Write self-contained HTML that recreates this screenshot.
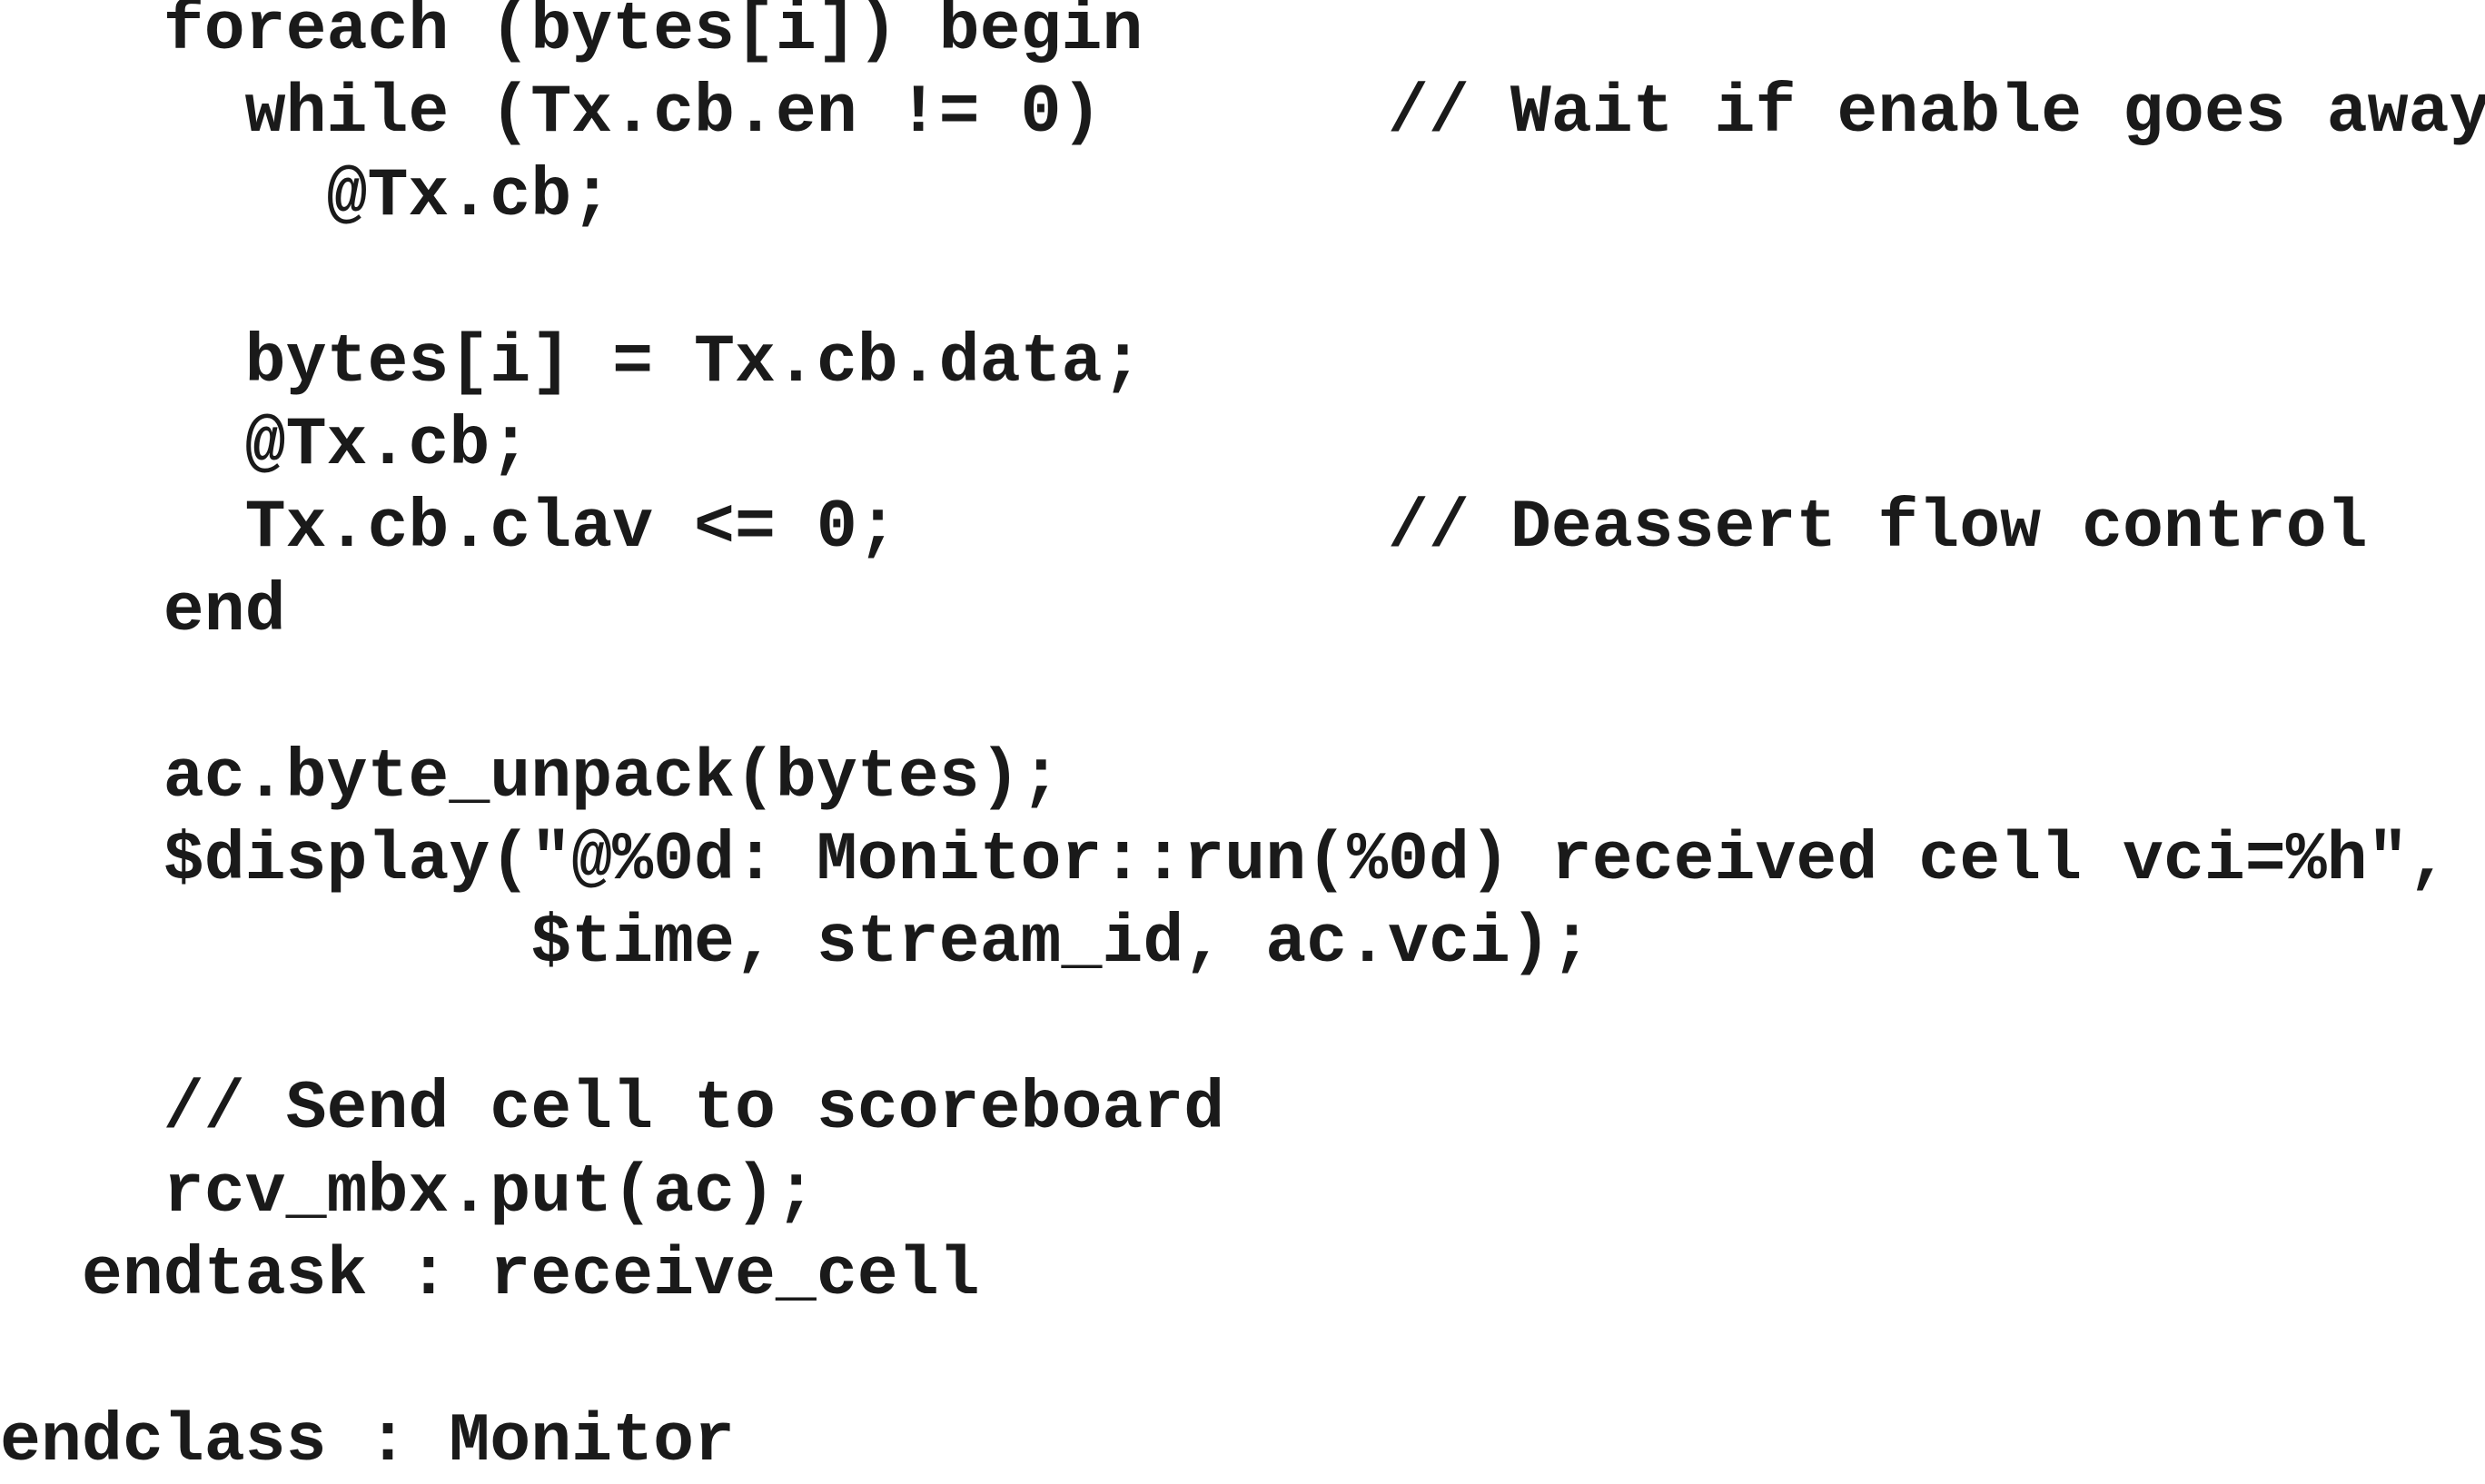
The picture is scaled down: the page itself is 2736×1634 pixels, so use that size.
<!DOCTYPE html>
<html><head><meta charset="utf-8"><style>
html,body{margin:0;padding:0;background:#fff;width:2736px;height:1608px;overflow:hidden}
pre{position:absolute;left:0;top:-11px;margin:0;font-family:"Liberation Mono",monospace;font-weight:bold;font-size:74.9px;line-height:91.4px;color:#1a1a1a}
</style></head><body><pre>    foreach (bytes[i]) begin
      while (Tx.cb.en != 0)       // Wait if enable goes away
        @Tx.cb;

      bytes[i] = Tx.cb.data;
      @Tx.cb;
      Tx.cb.clav &lt;= 0;            // Deassert flow control
    end

    ac.byte_unpack(bytes);
    $display("@%0d: Monitor::run(%0d) received cell vci=%h",
             $time, stream_id, ac.vci);

    // Send cell to scoreboard
    rcv_mbx.put(ac);
  endtask : receive_cell

endclass : Monitor</pre></body></html>
